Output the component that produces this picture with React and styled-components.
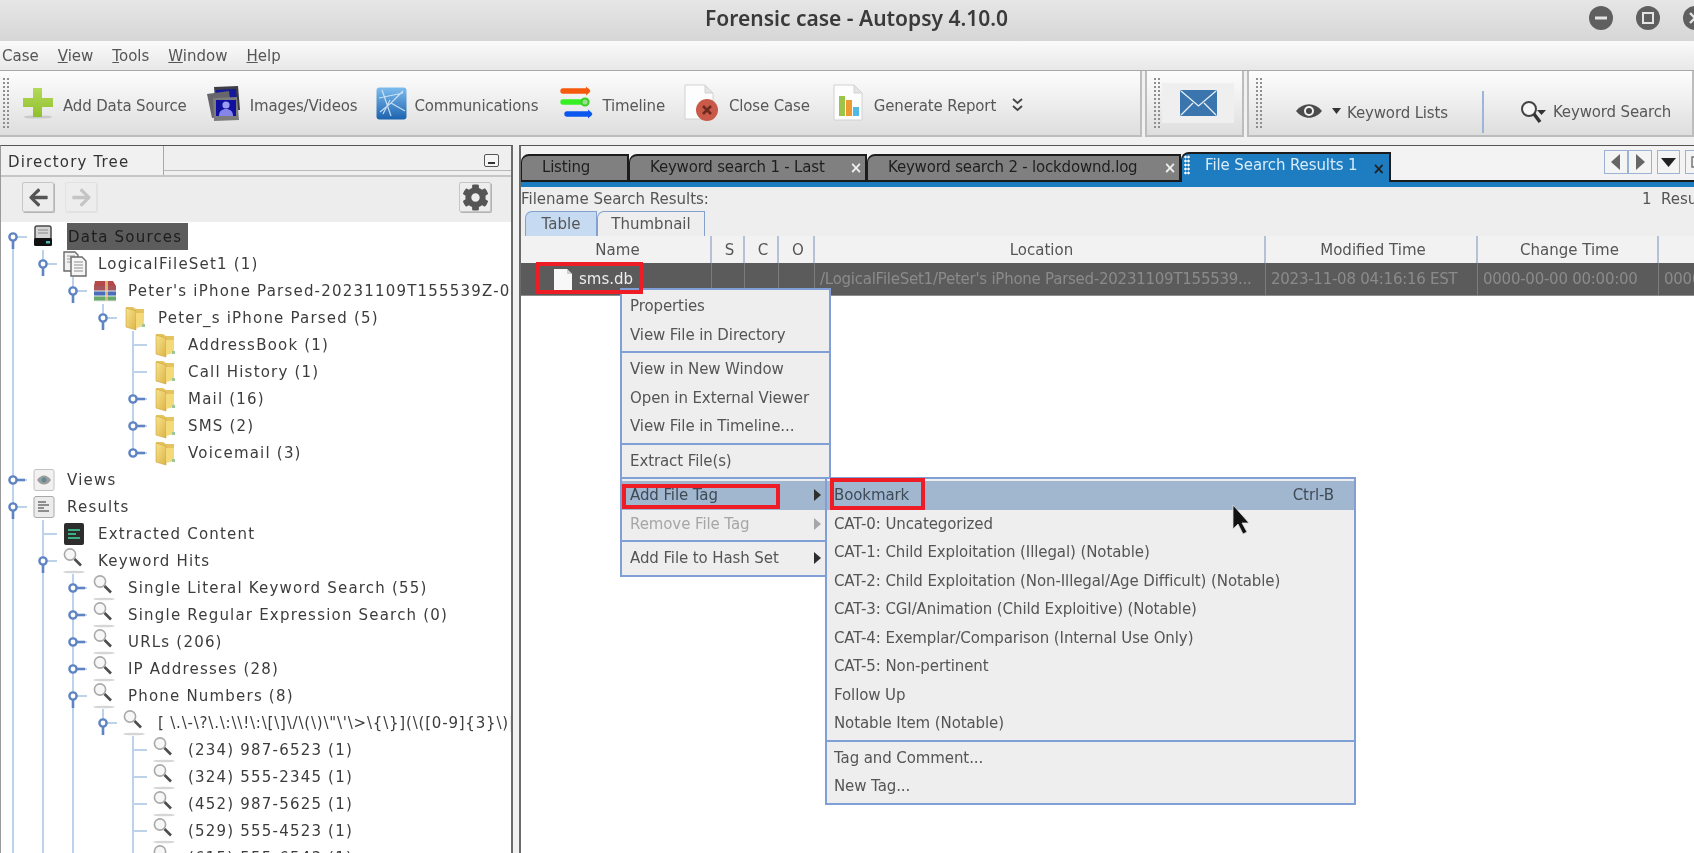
import styled, { createGlobalStyle } from 'styled-components'
import { FaArrowLeft, FaArrowRight, FaCog } from 'react-icons/fa'

const GlobalStyle = createGlobalStyle`
  html, body {
    margin: 0;
    padding: 0;
    background: #fff;
  }
  * {
    box-sizing: border-box;
  }
`

const LINE = '#bcd2ea'
const SANS = '"DejaVu Sans", "Liberation Sans", sans-serif'

const Page = styled.div`
  position: relative;
  display: flex;
  flex-direction: column;
  width: 1694px;
  height: 853px;
  overflow: hidden;
  background: #f1f1f1;
  font-family: ${SANS};
  font-size: 15px;
  color: #4a4a4a;
  white-space: nowrap;
  filter: blur(0.45px);
`

const TitleBar = styled.div`
  display: flex;
  align-items: center;
  flex: none;
  height: 41px;
  padding-left: 705px;
  padding-bottom: 6px;
  background: linear-gradient(#e6e6e6, #d6d6d6);
`

const Title = styled.div`
  font-family: "Noto Sans", sans-serif;
  font-size: 21px;
  font-weight: 600;
  color: #3a3a3a;
`

const WindowControls = styled.div`
  display: flex;
  gap: 23px;
  margin-left: auto;
  margin-right: -13px;
`

const WinButton = styled.div`
  display: flex;
  align-items: center;
  justify-content: center;
  width: 24px;
  height: 24px;
  border-radius: 50%;
  background: #5f5f5f;
  color: #e4e4e4;
`

const MenuBar = styled.div`
  display: flex;
  align-items: center;
  flex: none;
  gap: 19px;
  height: 30px;
  padding-left: 2px;
  background: linear-gradient(#fafafa, #e8e8e8);
  border-bottom: 1px solid #a9a9a9;
  color: #555;
`

const ToolbarRow = styled.div`
  display: flex;
  flex: none;
  gap: 3px;
  height: 66px;
`

const ToolbarGroup = styled.div`
  display: flex;
  align-items: ${p => (p.$low ? 'flex-end' : 'center')};
  flex: ${p => (p.$width ? 'none' : '1')};
  width: ${p => (p.$width ? `${p.$width}px` : 'auto')};
  height: 66px;
  background: linear-gradient(#fdfdfd, #dedede);
  border-right: 2px solid #bdbdbd;
  border-bottom: 2px solid #bdbdbd;
  border-left: ${p => (p.$first ? 'none' : '2px solid #bdbdbd')};
`

const Grip = styled.div`
  flex: none;
  align-self: center;
  width: 8px;
  height: 52px;
  margin-left: ${p => p.$left || 2}px;
  background-image: radial-gradient(#8f8f8f 1px, transparent 1.2px);
  background-size: 4px 4px;
`

const Tool = styled.div`
  display: flex;
  align-items: center;
  flex: none;
  gap: ${p => p.$gap}px;
  margin-left: ${p => p.$left}px;
  padding-top: ${p => p.$top || 0}px;
  padding-bottom: ${p => p.$bottom || 0}px;
  color: #585858;
`

const ToolText = styled.span`
  padding-top: ${p => (p.$flush ? 0 : 5)}px;
  letter-spacing: -0.15px;
`

const MailButton = styled.div`
  display: flex;
  align-items: center;
  justify-content: center;
  width: 72px;
  height: 40px;
  margin-left: 1px;
  background: #efefef;
`

const Divider = styled.div`
  flex: none;
  align-self: flex-end;
  width: 2px;
  height: 42px;
  margin-left: 34px;
  margin-bottom: 2px;
  background: #9db6d8;
`

const Main = styled.div`
  display: flex;
  flex: 1;
  gap: 6px;
  min-height: 0;
  padding-top: 8px;
`

const LeftPanel = styled.div`
  display: flex;
  flex-direction: column;
  flex: none;
  width: 513px;
  background: #fff;
  border-top: 1px solid #555;
  border-left: 1px solid #9a9a9a;
  border-right: 2px solid #6b6b6b;
`

const PanelHead = styled.div`
  display: flex;
  flex: none;
  height: 31px;
  background: #efefef;
  border-bottom: 2px solid #c6c6c6;
`

const PanelTab = styled.div`
  display: flex;
  align-items: center;
  width: 163px;
  height: 29px;
  padding: 2px 0 0 7px;
  background: #f1f1f1;
  border-right: 1px solid #a8a8a8;
  color: #333;
  letter-spacing: 1.15px;
`

const PanelRest = styled.div`
  display: flex;
  justify-content: flex-end;
  flex: 1;
  height: 25px;
  padding: 8px 12px 0 0;
  border-bottom: 1px solid #b9b9b9;
`

const MinBox = styled.div`
  display: flex;
  align-items: flex-end;
  justify-content: center;
  width: 15px;
  height: 13px;
  padding-bottom: 2px;
  border: 1.5px solid #555;
  border-radius: 2px;
  background: #f5f5f5;

  &::after {
    content: '';
    width: 7px;
    height: 2px;
    background: #333;
  }
`

const TreeTools = styled.div`
  display: flex;
  align-items: center;
  flex: none;
  gap: 11px;
  height: 45px;
  padding: 0 20px 5px 21px;
  background: #ededed;
`

const TreeButton = styled.div`
  display: flex;
  align-items: center;
  justify-content: center;
  width: 32px;
  height: 30px;
  margin-left: ${p => (p.$push ? 'auto' : '0')};
  border: 1px solid ${p => (p.$off ? '#e2e2e2' : '#c6c6c6')};
  border-radius: 2px;
  box-shadow: 1px 1px 0 ${p => (p.$off ? '#e2e2e2' : '#b4b4b4')};
  color: ${p => (p.$off ? '#c4c4c4' : '#555')};
  font-size: ${p => p.$size || 21}px;
`

const Tree = styled.div`
  flex: 1;
  min-height: 0;
  overflow: hidden;
  padding-top: 1px;
  color: #3c3c3c;
  letter-spacing: 1.2px;
`

const TreeRow = styled.div`
  display: flex;
  align-items: center;
  height: 27px;
`

const guide = {
  through: `linear-gradient(${LINE}, ${LINE}) 11px 0 / 2px 100% no-repeat`,
  upper: `linear-gradient(${LINE}, ${LINE}) 11px 0 / 2px 14px no-repeat`,
  lower: `linear-gradient(${LINE}, ${LINE}) 11px 13px / 2px 14px no-repeat`,
  branch: `linear-gradient(${LINE}, ${LINE}) 12px 13px / 14px 2px no-repeat`
}

const IndentCell = styled.div`
  flex: none;
  width: 30px;
  height: 27px;
  background: ${p => (p.$line ? guide.through : 'none')};
`

const BranchCell = styled.div`
  flex: none;
  width: 30px;
  height: 27px;
  background: ${guide.branch}, ${p => guide[p.$mode]};
`

const IconCell = styled.div`
  display: flex;
  align-items: center;
  flex: none;
  width: ${p => (p.$root ? 36 : 37)}px;
  height: 27px;
`

const TreeLabel = styled.div`
  display: flex;
  align-items: center;
  height: 27px;
  letter-spacing: ${p => (p.$tight ? 0.8 : 1.2)}px;
  ${p => p.$selected && `
    width: 121px;
    padding-left: 1px;
    background: #5c5c5c;
    color: #1d1d1d;
  `}
`

const RightPanel = styled.div`
  display: flex;
  flex-direction: column;
  flex: 1;
  min-width: 0;
  background: #fff;
  border-top: 1px solid #555;
  border-left: 2px solid #6b6b6b;
`

const TabStrip = styled.div`
  display: flex;
  align-items: flex-end;
  flex: none;
  height: 36px;
  background: #f3f3f3;
  border-bottom: 2px solid #1c1c1c;
`

const Tab = styled.div`
  display: flex;
  align-items: center;
  flex: none;
  width: ${p => p.$width}px;
  height: 28px;
  margin-bottom: -2px;
  padding-left: ${p => p.$pad}px;
  padding-bottom: 3px;
  background: #808080;
  border: 2px solid #1c1c1c;
  border-left-width: 1px;
  border-radius: 8px 0 0 0;
  color: #1e1e1e;
  letter-spacing: -0.2px;
`

const ActiveTab = styled(Tab)`
  height: 34px;
  margin-bottom: -6px;
  padding-bottom: 10px;
  background: #1e7cc0;
  border-bottom: none;
  color: #d9ecfb;
  letter-spacing: -0.1px;
`

const TabClose = styled.span`
  margin-left: auto;
  margin-right: ${p => (p.$dark ? 4 : 3)}px;
  padding-top: ${p => (p.$dark ? 7 : 3)}px;
  font-size: 15px;
  font-weight: bold;
  color: ${p => (p.$dark ? '#222' : '#eee')};
`

const TabGrip = styled.div`
  flex: none;
  width: 6px;
  height: 20px;
  margin-right: 15px;
  margin-left: -7px;
  background-image: radial-gradient(#fff 1px, transparent 1.2px);
  background-size: 3px 4px;
`

const NavGroup = styled.div`
  display: flex;
  align-self: flex-start;
  gap: 5px;
  margin: 4px -14px 0 auto;
`

const NavButton = styled.div`
  display: flex;
  align-items: center;
  justify-content: center;
  width: ${p => p.$width || 23}px;
  height: 24px;
  border: 1px solid #9db2d2;
  background: #f4f4f4;
`

const NavPair = styled.div`
  display: flex;
`

const BlueBar = styled.div`
  flex: none;
  height: 5px;
  background: #1e7cc0;
`

const ResultHead = styled.div`
  display: flex;
  align-items: center;
  flex: none;
  height: 24px;
  background: #eeeeee;
  color: #555;
`

const ResultName = styled.div`
  flex: none;
  width: 1121px;
`

const SubTabs = styled.div`
  display: flex;
  flex: none;
  height: 25px;
  padding-left: 4px;
  background: #eeeeee;
`

const SubTab = styled.div`
  display: flex;
  align-items: center;
  justify-content: center;
  width: ${p => p.$width}px;
  background: ${p => (p.$active ? '#c6dbf2' : '#eeeeee')};
  border: 1px solid #84a0cc;
  border-bottom: none;
  border-radius: 7px 0 0 0;
  color: #555;
`

const columns = '191px 33px 34px 36px 451px 212px 181px 320px'

const TableHead = styled.div`
  display: grid;
  grid-template-columns: ${columns};
  flex: none;
  height: 27px;
  background: #f2f2f2;
`

const HeadCell = styled.div`
  display: flex;
  align-items: center;
  justify-content: center;
  padding-left: 4px;
  border-right: 2px solid #b5c2d6;
  color: #555;
`

const TableRow = styled.div`
  display: grid;
  grid-template-columns: ${columns};
  flex: none;
  height: 33px;
  background: #5b5b5b;
  border-bottom: 1px solid #8d8d8d;
`

const Cell = styled.div`
  display: flex;
  align-items: center;
  gap: 7px;
  padding-left: ${p => p.$pad || 5}px;
  overflow: hidden;
  border-right: 1px solid #7c7c7c;
  color: ${p => (p.$bright ? '#ededed' : '#8b8b8b')};
  letter-spacing: ${p => (p.$bright ? 0 : -0.25)}px;
`

const Popup = styled.div`
  position: absolute;
  z-index: ${p => p.$layer};
  left: ${p => p.$left}px;
  top: ${p => p.$top}px;
  width: ${p => p.$width}px;
  padding: 2px 0 2px;
  background: #eeeeee;
  border: 2px solid #7f9fd6;
  color: #555;
  letter-spacing: -0.1px;
`

const PopupItem = styled.div`
  display: flex;
  align-items: center;
  height: 28.5px;
  padding: 0 ${p => p.$right || 8}px 0 ${p => p.$pad}px;
  background: ${p => (p.$active ? '#a1b7d0' : 'transparent')};
  color: ${p => (p.$off ? '#a6a6a6' : p.$active ? '#3f4a55' : '#555')};
`

const Separator = styled.div`
  height: 2px;
  margin: 2px 0;
  background: #7f9fd6;
`

const Shortcut = styled.span`
  margin-left: auto;
`

const Arrow = styled.span`
  margin-left: auto;
  width: 0;
  height: 0;
  border-top: 6px solid transparent;
  border-bottom: 6px solid transparent;
  border-left: 7px solid ${p => (p.$off ? '#a6a6a6' : '#2e2e2e')};
`

const RedBox = styled.div`
  position: absolute;
  z-index: 5;
  left: ${p => p.$left}px;
  top: ${p => p.$top}px;
  width: ${p => p.$width}px;
  height: ${p => p.$height}px;
  border: 4px solid #ee1c25;
`

const Pointer = styled.svg`
  position: absolute;
  z-index: 6;
  left: 1231px;
  top: 504px;
`

const AddIcon = () => (
  <svg width="32" height="34" viewBox="0 0 32 34">
    <defs>
      <linearGradient id="addG" x1="0" y1="0" x2="0" y2="1">
        <stop offset="0" stopColor="#b5d95a" />
        <stop offset="1" stopColor="#8fc02c" />
      </linearGradient>
    </defs>
    <ellipse cx="16" cy="31" rx="14" ry="1.6" fill="#c9c9c9" />
    <path d="M11 2h9v10h11v9H20v10h-9V21H1v-9h10z" fill="url(#addG)" />
  </svg>
)

const ImagesIcon = () => (
  <svg width="36" height="38" viewBox="0 0 36 38">
    <path d="M8 3l24-1 2 24-24 1z" fill="#3e3e46" />
    <path d="M10 6l20-1 1 17-20 1z" fill="#14189a" />
    <path d="M1 10l22-3 3 24-20 3z" fill="#66666c" />
    <path d="M7 14l24-1 2 23-25 1z" fill="#7c7c7c" />
    <rect x="10" y="16" width="20" height="16" fill="#10109e" />
    <circle cx="20" cy="21" r="3.6" fill="#9c9cf5" />
    <path d="M13 32c0-5 3-7 7-7s7 2 7 7z" fill="#8585ea" />
  </svg>
)

const CommsIcon = () => (
  <svg width="31" height="33" viewBox="0 0 31 33">
    <defs>
      <linearGradient id="commG" x1="0" y1="0" x2="0" y2="1">
        <stop offset="0" stopColor="#7dbcee" />
        <stop offset="1" stopColor="#1d62ae" />
      </linearGradient>
    </defs>
    <rect x="0.5" y="0.5" width="30" height="32" rx="3" fill="url(#commG)" />
    <path d="M3 11l24-5M6 3l9 26M27 4L15 16l-11 9M15 16l14 8M14 13l-7 14" stroke="#dcecfa" strokeWidth="1.2" strokeOpacity="0.85" fill="none" />
  </svg>
)

const TimelineIcon = () => (
  <svg width="33" height="36" viewBox="0 0 33 36">
    <path d="M3 6h24" stroke="#f4590c" strokeWidth="5.4" strokeLinecap="round" />
    <path d="M26 1.5l4.5 4.5-4.5 4.5z" fill="#f4590c" />
    <path d="M3 17h20" stroke="#35f022" strokeWidth="5.4" strokeLinecap="round" />
    <circle cx="25" cy="17" r="3.6" fill="#9adf90" stroke="#35d022" strokeWidth="2" />
    <path d="M7 29h22" stroke="#0a57ef" strokeWidth="5.4" strokeLinecap="round" />
    <path d="M28 24.5l4.5 4.5-4.5 4.5z" fill="#0a57ef" />
  </svg>
)

const CloseIcon = () => (
  <svg width="34" height="38" viewBox="0 0 34 38">
    <path d="M1 1h20l8 8v26H1z" fill="#fdfdfd" stroke="#d2d2d2" />
    <path d="M21 1v8h8z" fill="#e4e4e4" stroke="#d2d2d2" />
    <circle cx="23" cy="26" r="11" fill="#c95a4a" />
    <path d="M19 22l8 8M27 22l-8 8" stroke="#6e2a20" strokeWidth="2.6" />
  </svg>
)

const ReportIcon = () => (
  <svg width="31" height="38" viewBox="0 0 31 38">
    <path d="M1 1h20l8 8v27H1z" fill="#fdfdfd" stroke="#d2d2d2" />
    <path d="M21 1v8h8z" fill="#e4e4e4" stroke="#d2d2d2" />
    <rect x="6" y="12" width="6" height="20" fill="#9cc34a" />
    <rect x="13" y="16" width="6" height="16" fill="#ee9a32" />
    <rect x="20" y="23" width="6" height="9" fill="#52b9e4" />
  </svg>
)

const ChevronsIcon = () => (
  <svg width="11" height="14" viewBox="0 0 11 14">
    <path d="M1 1l4.5 4L10 1M1 8l4.5 4L10 8" stroke="#444" strokeWidth="1.8" fill="none" />
  </svg>
)

const MailIcon = () => (
  <svg width="37" height="26" viewBox="0 0 37 26">
    <rect width="37" height="26" rx="1.5" fill="#3a76ad" />
    <path d="M1 1l17.5 15L36 1M1 25l12-12M36 25L24 13" stroke="#e8eff6" strokeWidth="1.3" fill="none" />
  </svg>
)

const EyeIcon = () => (
  <svg width="28" height="16" viewBox="0 0 28 16">
    <path d="M1 8c7-9 19-9 26 0-7 9-19 9-26 0z" fill="#4c4c4c" />
    <circle cx="14" cy="8" r="5" fill="#f2f2f2" />
    <circle cx="14" cy="8" r="3" fill="#444" />
  </svg>
)

const Caret = () => (
  <svg width="9" height="6" viewBox="0 0 9 6">
    <path d="M0 0h9L4.5 6z" fill="#333" />
  </svg>
)

const SearchToolIcon = () => (
  <svg width="26" height="24" viewBox="0 0 26 24">
    <circle cx="9" cy="9" r="7" fill="#f6f6f6" stroke="#444" strokeWidth="2" />
    <path d="M14 14l6 8" stroke="#333" strokeWidth="3.4" />
    <path d="M17 10h9l-4.5 5z" fill="#333" />
  </svg>
)

const DriveIcon = () => (
  <svg width="24" height="25" viewBox="0 0 24 25">
    <rect x="4" y="2" width="16" height="14" rx="2" fill="#d5d5d5" stroke="#4a4a4a" strokeWidth="1.5" />
    <path d="M7 6h10M7 9h10" stroke="#8a8a8a" />
    <rect x="3" y="14" width="18" height="8" rx="1.5" fill="#111" />
    <rect x="15" y="17" width="4" height="2.5" fill="#4cb8b0" />
  </svg>
)

const DocsIcon = () => (
  <svg width="27" height="26" viewBox="0 0 27 26">
    <path d="M3 1h11l3 3v16H3z" fill="#f2f2f2" stroke="#6a6a6a" strokeWidth="1.4" />
    <path d="M6 5h8M6 8h8M6 11h8" stroke="#9a9a9a" />
    <path d="M10 6h11l4 4v15H10z" fill="#f6f6f6" stroke="#6a6a6a" strokeWidth="1.4" />
    <path d="M13 11h9M13 14h9M13 17h9M13 20h9" stroke="#8f8f8f" />
  </svg>
)

const RarIcon = () => (
  <svg width="27" height="22" viewBox="0 0 27 22">
    <path d="M4 1h18l3 5H3z" fill="#b5484a" />
    <path d="M3 6h22v5H3z" fill="#a5565c" />
    <path d="M3 11h22v5H3z" fill="#4a6cbd" />
    <path d="M3 16h22v5H3z" fill="#66a968" />
    <rect x="14" y="1" width="3" height="20" fill="#d8b679" />
    <path d="M3 11h22M3 16h22M3 21h22" stroke="#e6e6e6" />
  </svg>
)

const FolderIcon = () => (
  <svg width="27" height="26" viewBox="0 0 27 26">
    <defs>
      <linearGradient id="folderG" x1="0" y1="0" x2="1" y2="1">
        <stop offset="0" stopColor="#f8e38e" />
        <stop offset="1" stopColor="#dcb445" />
      </linearGradient>
    </defs>
    <path d="M5 2h7l3 2h8v17H5z" fill="#e5c45f" />
    <path d="M5 3l10 3v19L5 22z" fill="url(#folderG)" stroke="#c9a23c" strokeWidth="0.6" />
    <path d="M15 8h8v13l-8 2z" fill="#f3d978" />
    <rect x="21" y="19" width="3" height="3" fill="#9bc79b" />
  </svg>
)

const ViewsIcon = () => (
  <svg width="24" height="24" viewBox="0 0 24 24">
    <rect x="3" y="1.5" width="20" height="21" rx="2" fill="#f1f1f1" stroke="#c2c2c2" />
    <path d="M6 12c4-6 10-6 14 0-4 6-10 6-14 0z" fill="#9c9c9c" />
    <circle cx="13" cy="12" r="2.4" fill="#5a8a96" />
  </svg>
)

const ResultsIcon = () => (
  <svg width="24" height="24" viewBox="0 0 24 24">
    <rect x="3" y="1.5" width="20" height="21" rx="2" fill="#ececec" stroke="#a8a8a8" />
    <path d="M7 7h8M7 10h11M7 13h6M7 16h11" stroke="#6f6f6f" strokeWidth="1.5" />
  </svg>
)

const ExtractedIcon = () => (
  <svg width="26" height="24" viewBox="0 0 26 24">
    <rect x="3" y="1" width="20" height="22" rx="2" fill="#2d2d2d" />
    <path d="M7 7h12v2H7zM7 11h8v2H7zM7 15h12v2H7z" fill="#39b184" />
  </svg>
)

const LensIcon = () => (
  <svg width="27" height="27" viewBox="0 0 27 27">
    <ellipse cx="13" cy="25" rx="11" ry="1.3" fill="#d6d6d6" />
    <circle cx="9" cy="7.5" r="5.6" fill="#f7f7f7" stroke="#a9a9a9" strokeWidth="1.6" />
    <path d="M13.5 12l6.5 6.5" stroke="#4d4d4d" strokeWidth="2.6" />
  </svg>
)

const FileIcon = () => (
  <svg width="18" height="21" viewBox="0 0 18 21">
    <path d="M0 0h13l5 5v16H0z" fill="#f8f8f8" />
    <path d="M13 0v5h5z" fill="#cfcfcf" />
  </svg>
)

const Toggle = ({ open }) => (
  <svg width="30" height="27" viewBox="0 0 30 27">
    {open
      ? <path d="M12 17v9" stroke="#5f84c4" strokeWidth="2.6" />
      : <path d="M15 14h9" stroke="#5f84c4" strokeWidth="2.6" />}
    <circle cx="12" cy="14" r="3.6" fill="#fff" stroke="#5f84c4" strokeWidth="2.4" />
  </svg>
)

const icons = {
  drive: DriveIcon,
  docs: DocsIcon,
  rar: RarIcon,
  folder: FolderIcon,
  views: ViewsIcon,
  results: ResultsIcon,
  extracted: ExtractedIcon,
  lens: LensIcon
}

const treeRows = [
  { label: 'Data Sources', depth: 0, icon: 'drive', toggle: 'open', lines: [], mode: 'lower', selected: true },
  { label: 'LogicalFileSet1 (1)', depth: 1, icon: 'docs', toggle: 'open', lines: [0], mode: 'upper' },
  { label: "Peter's iPhone Parsed-20231109T155539Z-0", depth: 2, icon: 'rar', toggle: 'open', lines: [0], mode: 'upper' },
  { label: 'Peter_s iPhone Parsed (5)', depth: 3, icon: 'folder', toggle: 'open', lines: [0], mode: 'upper' },
  { label: 'AddressBook (1)', depth: 4, icon: 'folder', lines: [0], mode: 'through' },
  { label: 'Call History (1)', depth: 4, icon: 'folder', lines: [0], mode: 'through' },
  { label: 'Mail (16)', depth: 4, icon: 'folder', toggle: 'closed', lines: [0], mode: 'through' },
  { label: 'SMS (2)', depth: 4, icon: 'folder', toggle: 'closed', lines: [0], mode: 'through' },
  { label: 'Voicemail (3)', depth: 4, icon: 'folder', toggle: 'closed', lines: [0], mode: 'upper' },
  { label: 'Views', depth: 0, icon: 'views', toggle: 'closed', lines: [], mode: 'through' },
  { label: 'Results', depth: 0, icon: 'results', toggle: 'open', lines: [], mode: 'through' },
  { label: 'Extracted Content', depth: 1, icon: 'extracted', lines: [0], mode: 'through' },
  { label: 'Keyword Hits', depth: 1, icon: 'lens', toggle: 'open', lines: [0], mode: 'through' },
  { label: 'Single Literal Keyword Search (55)', depth: 2, icon: 'lens', toggle: 'closed', lines: [0, 1], mode: 'through' },
  { label: 'Single Regular Expression Search (0)', depth: 2, icon: 'lens', toggle: 'closed', lines: [0, 1], mode: 'through' },
  { label: 'URLs (206)', depth: 2, icon: 'lens', toggle: 'closed', lines: [0, 1], mode: 'through' },
  { label: 'IP Addresses (28)', depth: 2, icon: 'lens', toggle: 'closed', lines: [0, 1], mode: 'through' },
  { label: 'Phone Numbers (8)', depth: 2, icon: 'lens', toggle: 'open', lines: [0, 1], mode: 'through' },
  { label: '[ \\.\\-\\?\\.\\:\\\\!\\:\\[\\]\\/\\(\\)\\"\\\'\\>\\{\\}](\\([0-9]{3}\\)|', depth: 3, icon: 'lens', toggle: 'open', lines: [0, 1, 2], mode: 'upper', tight: true },
  { label: '(234) 987-6523 (1)', depth: 4, icon: 'lens', lines: [0, 1, 2], mode: 'through' },
  { label: '(324) 555-2345 (1)', depth: 4, icon: 'lens', lines: [0, 1, 2], mode: 'through' },
  { label: '(452) 987-5625 (1)', depth: 4, icon: 'lens', lines: [0, 1, 2], mode: 'through' },
  { label: '(529) 555-4523 (1)', depth: 4, icon: 'lens', lines: [0, 1, 2], mode: 'through' },
  { label: '(615) 555-6543 (1)', depth: 4, icon: 'lens', lines: [0, 1, 2], mode: 'through' }
]

const Row = ({ row }) => {
  const Icon = icons[row.icon]
  const cells = Array.from({ length: row.depth }, (_, i) => i)

  return (
    <TreeRow>
      {cells.map(i => <IndentCell key={i} $line={row.lines.includes(i)} />)}
      <BranchCell $mode={row.mode}>
        {row.toggle && <Toggle open={row.toggle === 'open'} />}
      </BranchCell>
      <IconCell $root={row.depth === 0}><Icon /></IconCell>
      <TreeLabel $selected={row.selected} $tight={row.tight}>{row.label}</TreeLabel>
    </TreeRow>
  )
}

const menuTop = [
  ['Properties', 'View File in Directory'],
  ['View in New Window', 'Open in External Viewer', 'View File in Timeline...'],
  ['Extract File(s)']
]

const tagItems = [
  'CAT-0: Uncategorized',
  'CAT-1: Child Exploitation (Illegal) (Notable)',
  'CAT-2: Child Exploitation (Non-Illegal/Age Difficult) (Notable)',
  'CAT-3: CGI/Animation (Child Exploitive) (Notable)',
  'CAT-4: Exemplar/Comparison (Internal Use Only)',
  'CAT-5: Non-pertinent',
  'Follow Up',
  'Notable Item (Notable)'
]

const App = () => (
  <Page>
    <GlobalStyle />
    <TitleBar>
      <Title>Forensic case - Autopsy 4.10.0</Title>
      <WindowControls>
        <WinButton>
          <svg width="12" height="12" viewBox="0 0 12 12"><rect y="4.5" width="12" height="3" fill="currentColor" /></svg>
        </WinButton>
        <WinButton>
          <svg width="12" height="12" viewBox="0 0 12 12"><rect x="1" y="1" width="10" height="10" fill="none" stroke="currentColor" strokeWidth="2" /></svg>
        </WinButton>
        <WinButton>
          <svg width="12" height="12" viewBox="0 0 12 12"><path d="M1 1l10 10M11 1L1 11" stroke="currentColor" strokeWidth="2.4" /></svg>
        </WinButton>
      </WindowControls>
    </TitleBar>

    <MenuBar>
      <span>Case</span>
      <span><u>V</u>iew</span>
      <span><u>T</u>ools</span>
      <span><u>W</u>indow</span>
      <span><u>H</u>elp</span>
    </MenuBar>

    <ToolbarRow>
      <ToolbarGroup $width={1142} $first>
        <Grip />
        <Tool $left={12} $gap={9}><AddIcon /><ToolText>Add Data Source</ToolText></Tool>
        <Tool $left={19} $gap={8}><ImagesIcon /><ToolText>Images/Videos</ToolText></Tool>
        <Tool $left={19} $gap={7}><CommsIcon /><ToolText>Communications</ToolText></Tool>
        <Tool $left={22} $gap={9}><TimelineIcon /><ToolText>Timeline</ToolText></Tool>
        <Tool $left={19} $gap={11}><CloseIcon /><ToolText>Close Case</ToolText></Tool>
        <Tool $left={23} $gap={10}><ReportIcon /><ToolText>Generate Report</ToolText></Tool>
        <Tool $left={16} $gap={0} $top={4}><ChevronsIcon /></Tool>
      </ToolbarGroup>
      <ToolbarGroup $width={99}>
        <Grip $left={6} />
        <MailButton><MailIcon /></MailButton>
      </ToolbarGroup>
      <ToolbarGroup $low>
        <Grip $left={6} />
        <Tool $left={32} $gap={9} $bottom={16}><EyeIcon /><Caret /></Tool>
        <Tool $left={6} $gap={0} $bottom={13}><ToolText $flush>Keyword Lists</ToolText></Tool>
        <Divider />
        <Tool $left={36} $gap={7} $bottom={11}><SearchToolIcon /><ToolText $flush>Keyword Search</ToolText></Tool>
      </ToolbarGroup>
    </ToolbarRow>

    <Main>
      <LeftPanel>
        <PanelHead>
          <PanelTab>Directory Tree</PanelTab>
          <PanelRest><MinBox /></PanelRest>
        </PanelHead>
        <TreeTools>
          <TreeButton><FaArrowLeft /></TreeButton>
          <TreeButton $off><FaArrowRight /></TreeButton>
          <TreeButton $push $size={27}><FaCog /></TreeButton>
        </TreeTools>
        <Tree>
          {treeRows.map(row => <Row key={row.label} row={row} />)}
        </Tree>
      </LeftPanel>

      <RightPanel>
        <TabStrip>
          <Tab $width={108} $pad={20}>Listing</Tab>
          <Tab $width={238} $pad={20}>Keyword search 1 - Last<TabClose>×</TabClose></Tab>
          <Tab $width={314} $pad={20}>Keyword search 2 - lockdownd.log<TabClose>×</TabClose></Tab>
          <ActiveTab $width={210} $pad={9}>
            <TabGrip />
            File Search Results 1
            <TabClose $dark>×</TabClose>
          </ActiveTab>
          <NavGroup>
            <NavPair>
              <NavButton $width={24}>
                <svg width="10" height="16" viewBox="0 0 10 16"><path d="M9 0v16L0 8z" fill="#666" /></svg>
              </NavButton>
              <NavButton $width={24}>
                <svg width="10" height="16" viewBox="0 0 10 16"><path d="M1 0v16l9-8z" fill="#666" /></svg>
              </NavButton>
            </NavPair>
            <NavButton>
              <svg width="15" height="9" viewBox="0 0 15 9"><path d="M0 0h15L7.5 9z" fill="#222" /></svg>
            </NavButton>
            <NavButton>
              <svg width="12" height="12" viewBox="0 0 12 12"><rect x="1" y="1" width="10" height="10" fill="none" stroke="#777" strokeWidth="1.5" /></svg>
            </NavButton>
          </NavGroup>
        </TabStrip>
        <BlueBar />
        <ResultHead>
          <ResultName>Filename Search Results:</ResultName>
          <span>1&nbsp; Results</span>
        </ResultHead>
        <SubTabs>
          <SubTab $width={72} $active>Table</SubTab>
          <SubTab $width={108}>Thumbnail</SubTab>
        </SubTabs>
        <TableHead>
          <HeadCell>Name</HeadCell>
          <HeadCell>S</HeadCell>
          <HeadCell>C</HeadCell>
          <HeadCell>O</HeadCell>
          <HeadCell>Location</HeadCell>
          <HeadCell>Modified Time</HeadCell>
          <HeadCell>Change Time</HeadCell>
          <HeadCell>Access Time</HeadCell>
        </TableHead>
        <TableRow>
          <Cell $pad={33} $bright><FileIcon />sms.db</Cell>
          <Cell />
          <Cell />
          <Cell />
          <Cell>/LogicalFileSet1/Peter's iPhone Parsed-20231109T155539...</Cell>
          <Cell>2023-11-08 04:16:16 EST</Cell>
          <Cell>0000-00-00 00:00:00</Cell>
          <Cell>0000-00-00 00:00:00</Cell>
        </TableRow>
      </RightPanel>
    </Main>

    <Popup $layer={2} $left={620} $top={288} $width={211}>
      {menuTop.map(group => (
        <div key={group[0]}>
          {group.map(item => <PopupItem key={item} $pad={8}>{item}</PopupItem>)}
          <Separator />
        </div>
      ))}
      <PopupItem $pad={8} $active>Add File Tag<Arrow /></PopupItem>
      <PopupItem $pad={8} $off>Remove File Tag<Arrow $off /></PopupItem>
      <Separator />
      <PopupItem $pad={8}>Add File to Hash Set<Arrow /></PopupItem>
    </Popup>

    <Popup $layer={3} $left={825} $top={477} $width={531}>
      <PopupItem $pad={7} $right={20} $active>Bookmark<Shortcut>Ctrl-B</Shortcut></PopupItem>
      {tagItems.map(item => <PopupItem key={item} $pad={7}>{item}</PopupItem>)}
      <Separator />
      <PopupItem $pad={7}>Tag and Comment...</PopupItem>
      <PopupItem $pad={7}>New Tag...</PopupItem>
    </Popup>

    <RedBox $left={536} $top={262} $width={107} $height={32} />
    <RedBox $left={622} $top={484} $width={158} $height={25} />
    <RedBox $left={830} $top={478} $width={95} $height={32} />

    <Pointer width="20" height="32" viewBox="0 0 20 32">
      <path d="M2 1v24l5-5 5 10 4-2-5-9h7z" fill="#111" stroke="#ddd" strokeWidth="0.8" />
    </Pointer>
  </Page>
)

export default App
